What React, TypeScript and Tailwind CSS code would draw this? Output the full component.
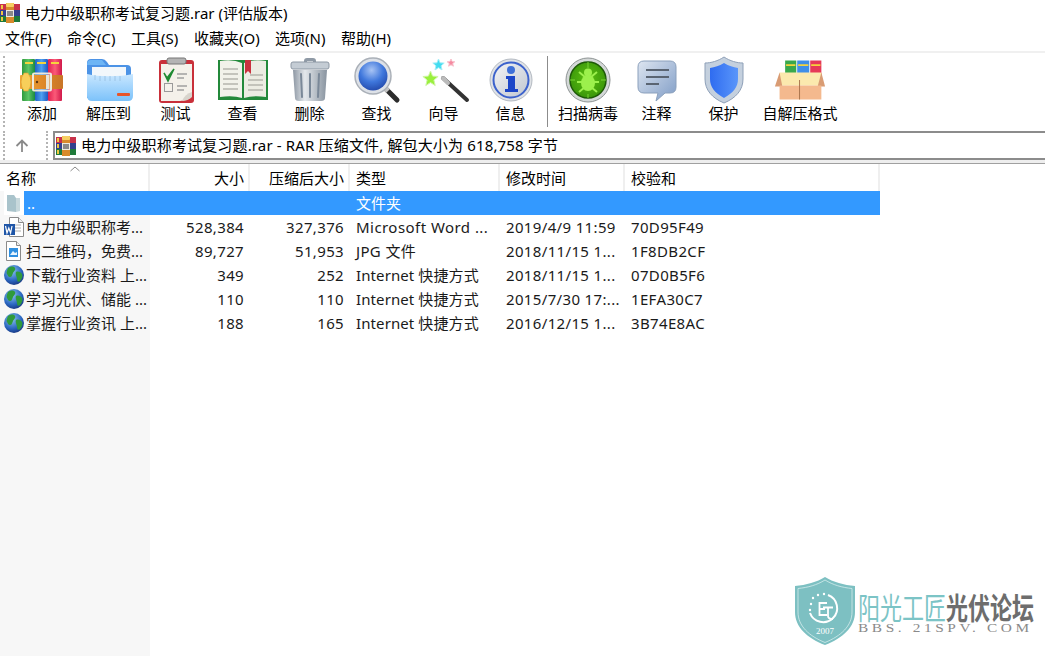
import { ReactNode } from 'react';

const font = { fontFamily: '"Noto Sans", "Noto Sans CJK SC", sans-serif' };

function starPoints(cx: number, cy: number, r: number) {
  const pts: string[] = [];
  for (let i = 0; i < 10; i++) {
    const rad = i % 2 === 0 ? r : r * 0.45;
    const a = -Math.PI / 2 + (i * Math.PI) / 5;
    pts.push(`${(cx + rad * Math.cos(a)).toFixed(1)},${(cy + rad * Math.sin(a)).toFixed(1)}`);
  }
  return pts.join(' ');
}

function RarIcon() {
  return (
    <svg width="44" height="44" viewBox="0 0 44 44">
      <defs>
        <linearGradient id="mg" x1="0" x2="1" y1="0" y2="0">
          <stop offset="0" stopColor="#2f9a3d" />
          <stop offset="0.5" stopColor="#5cc465" />
          <stop offset="1" stopColor="#1c8a40" />
        </linearGradient>
        <linearGradient id="mb" x1="0" x2="1" y1="0" y2="0">
          <stop offset="0" stopColor="#1f62c4" />
          <stop offset="0.5" stopColor="#4da0f0" />
          <stop offset="1" stopColor="#1f58c0" />
        </linearGradient>
        <linearGradient id="mr" x1="0" x2="1" y1="0" y2="0">
          <stop offset="0" stopColor="#e02050" />
          <stop offset="0.5" stopColor="#fb5a78" />
          <stop offset="1" stopColor="#d0184a" />
        </linearGradient>
        <linearGradient id="mo" x1="0" x2="1" y1="0" y2="0">
          <stop offset="0" stopColor="#f0a838" />
          <stop offset="0.5" stopColor="#e08a2a" />
          <stop offset="1" stopColor="#c87528" />
        </linearGradient>
      </defs>
      <rect x="2" y="1" width="13" height="42" rx="1" fill="url(#mg)" />
      <rect x="15" y="1" width="13" height="42" rx="1" fill="url(#mb)" />
      <rect x="28" y="1" width="14" height="42" rx="1" fill="url(#mr)" />
      <rect x="5" y="4" width="8" height="2" fill="#f5d33c" />
      <rect x="17" y="4" width="9" height="2" fill="#f5d33c" />
      <rect x="31" y="4" width="8" height="2" fill="#f5d33c" />
      <rect x="0" y="17" width="43" height="14" rx="1" fill="url(#mo)" />
      <path d="M4 15h4q3 4 3 9t-3 9H4q-3-4-3-9t3-9z" fill="#f7cf5a" stroke="#d89a30" strokeWidth="0.600" />
      <rect x="13" y="15.500" width="18" height="17" rx="1" fill="none" stroke="#ede8dc" strokeWidth="2" />
      <circle cx="17" cy="24" r="1.200" fill="#5a3410" />
      <rect x="26" y="17" width="3.500" height="14" fill="#e9e4d8" />
    </svg>
  );
}

function SmallRar({ size }: { size: number }) {
  return (
    <svg width={size} height={size} viewBox="0 0 20 20" className="shrink-0">
      <rect x="0" y="1" width="20" height="6" fill="#c8324a" />
      <rect x="0" y="7" width="20" height="6" fill="#34408e" />
      <rect x="0" y="13" width="20" height="6" fill="#1f7a3a" />
      <rect x="1" y="2" width="2" height="4" fill="#f0c840" />
      <rect x="1" y="8" width="2" height="4" fill="#f0c840" />
      <rect x="1" y="14" width="2" height="4" fill="#f0c840" />
      <rect x="6" y="0" width="8" height="20" fill="#d88a2c" />
      <rect x="6" y="0" width="8" height="4" rx="1" fill="#f6cf62" />
      <rect x="6.500" y="7.500" width="7" height="6" fill="#8a8a8a" stroke="#efeadf" />
    </svg>
  );
}

function FolderIcon() {
  return (
    <svg width="52" height="48" viewBox="0 0 52 48">
      <defs>
        <linearGradient id="fb" x1="0" x2="0" y1="0" y2="1">
          <stop offset="0" stopColor="#c9e7ff" />
          <stop offset="1" stopColor="#7cc2fa" />
        </linearGradient>
      </defs>
      <path d="M4 7q0-4 4-4h11q3 0 5 3l2 3h18q4 0 4 4v29H4z" fill="#4c93e6" />
      <path d="M4 9q0-5 4-5h11l4 5z" fill="#6db5f5" />
      <rect x="9" y="11" width="34" height="14" fill="#f2f7fb" />
      <path d="M4 18c12 3 32 3 46 0v22q0 5-5 5H9q-5 0-5-5z" fill="url(#fb)" />
      <path d="M12 19v5M17 20v5M22 20v5M27 20v5M32 20v5M37 20v5" stroke="#9cc4e6" />
      <rect x="34" y="37" width="13" height="3" rx="1" fill="#e8552a" />
    </svg>
  );
}

function TestIcon() {
  return (
    <svg width="52" height="48" viewBox="0 0 52 48">
      <rect x="9" y="4" width="35" height="43" rx="3" fill="#c9303a" />
      <path d="M11 8h31v30q-6 7-12 7H11z" fill="#f4f1ea" />
      <path d="M42 36q-7 2-10 9 6 0 10-4z" fill="#d8d4cc" />
      <rect x="17" y="2" width="19" height="6" rx="2" fill="#b4b4b4" stroke="#777" />
      <path d="M14 17l3 5 7-9-6 12z" fill="#1f8a32" stroke="#1f8a32" strokeWidth="1.500" />
      <rect x="14.500" y="27.500" width="8" height="8" fill="none" stroke="#9a9a9a" />
      <path d="M27 18h10M27 22h7M27 30h10M27 34h7" stroke="#a0a0a0" strokeWidth="1.500" />
    </svg>
  );
}

function ViewIcon() {
  return (
    <svg width="52" height="48" viewBox="0 0 52 48">
      <path d="M1 4h50v40H1z" fill="#23893a" />
      <path d="M3 5q13-2 22 2v35q-9-3-22-1z" fill="#f2f2ea" />
      <path d="M49 5q-13-2-22 2v35q9-3 22-1z" fill="#ecece2" />
      <path d="M6 13h15M6 18h15M6 23h15M6 28h15M6 33h15M33 19h13M31 24h15M31 29h15M31 34h15" stroke="#b5b5ad" strokeWidth="1.500" />
      <path d="M28 4h6v14l-3-3-3 3z" fill="#c9323e" />
    </svg>
  );
}

function TrashIcon() {
  return (
    <svg width="52" height="48" viewBox="0 0 52 48">
      <defs>
        <linearGradient id="tb" x1="0" x2="1" y1="0" y2="0">
          <stop offset="0" stopColor="#8d97a3" />
          <stop offset="0.35" stopColor="#e4e8ec" />
          <stop offset="1" stopColor="#88939f" />
        </linearGradient>
      </defs>
      <path d="M20 5q0-3 3-3h6q3 0 3 3v2h-3V5h-6v2h-3z" fill="#8f9aa6" />
      <rect x="7" y="6" width="38" height="7" rx="2" fill="#c4ccd4" stroke="#8d98a4" />
      <path d="M9 14h34l-2 28q0 3-4 3H15q-4 0-4-3z" fill="url(#tb)" />
      <path d="M17 18l1 23M26 18v23M35 18l-1 23" stroke="#7a8898" strokeWidth="2" strokeLinecap="round" />
    </svg>
  );
}

function FindIcon() {
  return (
    <svg width="52" height="48" viewBox="0 0 52 48">
      <defs>
        <radialGradient id="lens" cx="0.45" cy="0.3" r="0.8">
          <stop offset="0" stopColor="#a8c4f4" />
          <stop offset="0.5" stopColor="#3f77dc" />
          <stop offset="1" stopColor="#1d3fa0" />
        </radialGradient>
      </defs>
      <path d="M35 33l11 11" stroke="#2c2c2c" strokeWidth="5" strokeLinecap="round" />
      <path d="M31 29l6 6" stroke="#c4c4c4" strokeWidth="5" />
      <circle cx="22" cy="20" r="18" fill="#dde1e7" stroke="#aab0b8" strokeWidth="1.500" />
      <circle cx="22" cy="20" r="14.500" fill="url(#lens)" />
    </svg>
  );
}

function WizardIcon() {
  return (
    <svg width="52" height="48" viewBox="0 0 52 48">
      <path d="M25 22l24 22" stroke="#333" strokeWidth="4" strokeLinecap="round" />
      <path d="M25 22l5 5" stroke="#bbb" strokeWidth="4" strokeLinecap="round" />
      <polygon points={starPoints(12.5, 23, 8)} fill="#9af03c" stroke="#d0f5a6" />
      <polygon points={starPoints(20.5, 9, 6)} fill="#42dcf0" stroke="#a6eef8" />
      <polygon points={starPoints(33, 7, 4)} fill="#f58aa0" stroke="#f9c0cc" />
    </svg>
  );
}

function InfoIcon() {
  return (
    <svg width="52" height="48" viewBox="0 0 52 48">
      <defs>
        <linearGradient id="ib" x1="0" x2="1" y1="0" y2="1">
          <stop offset="0" stopColor="#f4f4f6" />
          <stop offset="1" stopColor="#bfc6d0" />
        </linearGradient>
      </defs>
      <circle cx="26" cy="24" r="21" fill="#dfe2e6" stroke="#b4bac2" />
      <circle cx="26" cy="24" r="17.500" fill="url(#ib)" stroke="#3c62cc" strokeWidth="2" />
      <circle cx="26" cy="14" r="4" fill="#3f70d8" />
      <path d="M21 20h9v13h3v3H20v-3h3v-10h-2z" fill="#1c46c8" />
    </svg>
  );
}

function BugIcon() {
  return (
    <svg width="52" height="48" viewBox="0 0 52 48">
      <defs>
        <radialGradient id="bg" cx="0.5" cy="0.45" r="0.55">
          <stop offset="0" stopColor="#5cc010" />
          <stop offset="1" stopColor="#3a960a" />
        </radialGradient>
      </defs>
      <circle cx="26" cy="24" r="22" fill="#d4d8d8" stroke="#8e9494" />
      <circle cx="26" cy="24" r="18" fill="url(#bg)" stroke="#1e5a08" strokeWidth="1.500" />
      <path d="M26 6v6M8 24h5M44 24h-5M26 42v-4" stroke="#7ad436" />
      <ellipse cx="26" cy="27" rx="7" ry="8" fill="#9cf04c" />
      <circle cx="26" cy="16.500" r="4" fill="#9cf04c" />
      <path d="M17 16l6 5M35 16l-6 5M15 26h7M37 26h-7M17 36l6-5M35 36l-6-5" stroke="#9cf04c" strokeWidth="2" />
    </svg>
  );
}

function CommentIcon() {
  return (
    <svg width="52" height="48" viewBox="0 0 52 48">
      <defs>
        <linearGradient id="cb" x1="0" x2="1" y1="0" y2="1">
          <stop offset="0" stopColor="#dde5f0" />
          <stop offset="1" stopColor="#7f9cc6" />
        </linearGradient>
      </defs>
      <path d="M13 5h26q6 0 6 6v20q0 6-6 6h-5l-9 8 2-8H13q-6 0-6-6V11q0-6 6-6z" fill="url(#cb)" stroke="#8ba0bc" />
      <path d="M15 14h23M15 21h23M15 28h13" stroke="#5a6472" strokeWidth="2" />
    </svg>
  );
}

function ShieldIcon() {
  return (
    <svg width="52" height="48" viewBox="0 0 52 48">
      <defs>
        <linearGradient id="sb" x1="0" x2="1" y1="0" y2="0">
          <stop offset="0" stopColor="#2f6cf0" />
          <stop offset="1" stopColor="#5a96fa" />
        </linearGradient>
      </defs>
      <path d="M26 1c6 4 13 6 19 6v16c0 11-7 19-19 24C14 42 7 34 7 23V7c6 0 13-2 19-6z" fill="#c4d0de" stroke="#8ea0b8" />
      <path d="M26 7c5 3 9 4 14 5v11c0 8-5 14-14 19-9-5-14-11-14-19V12c5-1 9-2 14-5z" fill="url(#sb)" />
    </svg>
  );
}

function BoxIcon() {
  return (
    <svg width="52" height="48" viewBox="0 0 56 48">
      <rect x="12" y="3" width="12" height="16" fill="#39a84c" />
      <rect x="25" y="3" width="13" height="16" fill="#3f8fe8" />
      <rect x="39" y="3" width="12" height="16" fill="#e63a58" />
      <path d="M13 8h10M26 8h11M40 8h10" stroke="#f5d33c" strokeWidth="2" />
      <path d="M6 16h45l2 14H4z" fill="#fbe9ae" />
      <path d="M6 16L1 31h8zM51 16l4 15h-8z" fill="#d99c74" />
      <path d="M6 30h45v15H6z" fill="#f4b98e" />
      <path d="M27.500 24v21" stroke="#a5704a" />
    </svg>
  );
}

function WordIcon() {
  return (
    <svg width="22" height="22" viewBox="0 0 22 22">
      <path d="M6.500 1.500h9l5 5v14h-14z" fill="#fff" stroke="#8a8a8a" />
      <path d="M15.500 1.500v5h5" fill="#eee" stroke="#8a8a8a" />
      <path d="M10 9h8M12 12h6M12 15h6" stroke="#b0b0b0" />
      <rect x="1" y="8" width="11" height="11" fill="#1f56a8" />
      <path d="M2.500 10l1.500 7 1.800-5 1.800 5 1.400-7" fill="none" stroke="#fff" strokeWidth="1.200" />
    </svg>
  );
}

function ImageIcon() {
  return (
    <svg width="22" height="22" viewBox="0 0 22 22">
      <path d="M3.500 1.500h10l4 4v15h-14z" fill="#fff" stroke="#8a8a8a" />
      <path d="M13.500 1.500v4h4" fill="#eee" stroke="#8a8a8a" />
      <rect x="6" y="8" width="9" height="9" fill="#2f8fe0" />
      <path d="M7 15l3-4 2 2 2-1v3z" fill="#e8f4fd" />
    </svg>
  );
}

function GlobeIcon({ id }: { id: string }) {
  return (
    <svg width="22" height="22" viewBox="0 0 22 22">
      <defs>
        <radialGradient id={id} cx="0.4" cy="0.3" r="0.8">
          <stop offset="0" stopColor="#8cc4f0" />
          <stop offset="0.6" stopColor="#2a66c0" />
          <stop offset="1" stopColor="#142a70" />
        </radialGradient>
      </defs>
      <circle cx="11" cy="11" r="10" fill={`url(#${id})`} />
      <path d="M5 4c3-2 6-2 7 0s-1 3-2 5-1 4-3 4-2-2-3-3 0-4 1-6zM13 8c2-1 5 0 6 2s0 5-2 7-3 0-3-2-2-5-1-7z" fill="#2f9a3c" />
    </svg>
  );
}

function UpFolderIcon() {
  return (
    <svg width="20" height="24" viewBox="0 0 20 24">
      <rect width="20" height="24" fill="#ffffff" />
      <path d="M3 4l7 0 2 3v14l-9-1z" fill="#a9c3cb" />
      <path d="M12 7l4 0v13l-4 1z" fill="#c7d8dc" />
    </svg>
  );
}

function ToolButton({ icon, label, width = 'w-[67px]' }: { icon: ReactNode; label: string; width?: string }) {
  return (
    <div className={`flex flex-col items-center shrink-0 ${width}`}>
      <div className="h-[48px] flex items-center justify-center">{icon}</div>
      <span className="mt-[-1px] text-[15px] leading-[20px] text-black whitespace-nowrap">{label}</span>
    </div>
  );
}

function Gripper() {
  return <div className="w-[2px] border-l-2 border-dotted border-[#b4b4b4]" />;
}

const rows = [
  { name: '电力中级职称考...', icon: <WordIcon />, size: '528,384', packed: '327,376', type: 'Microsoft Word ...', typeCls: 'tracking-[0.450px]', time: '2019/4/9 11:59', crc: '70D95F49' },
  { name: '扫二维码，免费...', icon: <ImageIcon />, size: '89,727', packed: '51,953', type: 'JPG 文件', typeCls: 'tracking-[0.350px]', time: '2018/11/15 1...', crc: '1F8DB2CF' },
  { name: '下载行业资料 上...', icon: <GlobeIcon id="g1" />, size: '349', packed: '252', type: 'Internet 快捷方式', typeCls: 'tracking-[0.100px]', time: '2018/11/15 1...', crc: '07D0B5F6' },
  { name: '学习光伏、储能 ...', icon: <GlobeIcon id="g2" />, size: '110', packed: '110', type: 'Internet 快捷方式', typeCls: 'tracking-[0.100px]', time: '2015/7/30 17:...', crc: '1EFA30C7' },
  { name: '掌握行业资讯 上...', icon: <GlobeIcon id="g3" />, size: '188', packed: '165', type: 'Internet 快捷方式', typeCls: 'tracking-[0.100px]', time: '2016/12/15 1...', crc: '3B74E8AC' },
];

const menus = [
  { label: '文件(F)', cls: 'w-[62px]' },
  { label: '命令(C)', cls: 'w-[64px]' },
  { label: '工具(S)', cls: 'w-[63px]' },
  { label: '收藏夹(O)', cls: 'w-[81px]' },
  { label: '选项(N)', cls: 'w-[66px]' },
  { label: '帮助(H)', cls: 'w-[60px]' },
];

function HeaderCell({ label, width, right }: { label: string; width: string; right?: boolean }) {
  return (
    <div className={`${width} h-full shrink-0 border-r-2 border-[#efefef] pl-[6px] pr-[4px] pt-[1px] flex items-center ${right ? 'justify-end' : ''}`}>
      {label}
    </div>
  );
}

function Watermark() {
  return (
    <div className="absolute left-[795px] top-[577px] flex items-start gap-[3px]">
      <svg width="60" height="68" viewBox="0 0 60 68">
        <path d="M30 0c8 5 19 8 30 9v26c0 15-12 26-30 33C12 61 0 50 0 35V9c11-1 22-4 30-9z" fill="#7dc0c2" />
        <path d="M30 3c8 5 17 7.500 27 8.500v23.500c0 14-11 24-27 30.500C14 59 3 49 3 35V11.500c10-1 19-3.500 27-8.500z" fill="none" stroke="#d4ecec" strokeWidth="0.800" />
        <path d="M33 18a14 14 0 1 1-18 18" fill="none" stroke="#fff" strokeWidth="2" />
        <path d="M32 26H24.500v12H32M28 30.500h10M33 30.500V39q0 3 5 3M25 32h5" fill="none" stroke="#fff" strokeWidth="1.800" />
        <circle cx="15" cy="33" r="1.200" fill="#fff" />
        <circle cx="16" cy="27" r="1.200" fill="#fff" />
        <circle cx="18" cy="21" r="1.200" fill="#fff" />
        <circle cx="23" cy="18" r="1.200" fill="#fff" />
        <circle cx="29" cy="17" r="1.200" fill="#fff" />
        <text x="30" y="57" textAnchor="middle" fontSize="9" fill="#fff" fontFamily='"Liberation Serif", serif'>2007</text>
      </svg>
      <div className="flex flex-col pt-[17px]">
        <div className="flex text-[22px] leading-[22px] font-['Noto_Sans_CJK_SC',sans-serif] whitespace-nowrap scale-y-[1.35]">
          <span className="text-[#7cc4c6]">阳光工匠</span>
          <span className="text-[#6d6d6d] font-bold">光伏论坛</span>
        </div>
        <div className="mt-[5px] text-[#8a8a8a] text-[12px] leading-[14px] tracking-[2.800px] font-['Liberation_Serif',serif] whitespace-nowrap origin-left scale-x-[1.28]">
          BBS. 21SPV. COM
        </div>
      </div>
    </div>
  );
}

export default function App() {
  return (
    <div className="relative w-[1045px] h-[656px] overflow-hidden bg-white flex flex-col text-[15px] text-[#1a1a1a]" style={font}>
      <div className="h-[26px] flex items-center gap-[5px] shrink-0 text-black">
        <SmallRar size={20} />
        <span>电力中级职称考试复习题.rar (评估版本)</span>
      </div>

      <div className="h-[25px] flex items-center shrink-0 text-black pl-[5px]">
        {menus.map(m => (
          <span key={m.label} className={`${m.cls} whitespace-nowrap`}>{m.label}</span>
        ))}
      </div>

      <div className="h-[80px] shrink-0 border-t-2 border-[#f0f0f0] flex pt-[3px] pb-[4px]">
        <div className="w-[9px] shrink-0 pl-[3px] flex">
          <Gripper />
        </div>
        <ToolButton icon={<RarIcon />} label="添加" width="w-[66px]" />
        <ToolButton icon={<FolderIcon />} label="解压到" />
        <ToolButton icon={<TestIcon />} label="测试" />
        <ToolButton icon={<ViewIcon />} label="查看" />
        <ToolButton icon={<TrashIcon />} label="删除" />
        <ToolButton icon={<FindIcon />} label="查找" />
        <ToolButton icon={<WizardIcon />} label="向导" />
        <ToolButton icon={<InfoIcon />} label="信息" />
        <div className="w-[9px] shrink-0 flex justify-start pl-[3px]">
          <div className="w-px bg-[#8c8c8c] h-full" />
        </div>
        <ToolButton icon={<BugIcon />} label="扫描病毒" width="w-[70px]" />
        <ToolButton icon={<CommentIcon />} label="注释" />
        <ToolButton icon={<ShieldIcon />} label="保护" />
        <ToolButton icon={<BoxIcon />} label="自解压格式" width="w-[86px]" />
      </div>

      <div className="h-[29px] shrink-0 flex items-stretch">
        <div className="w-[3px] shrink-0" />
        <Gripper />
        <div className="w-[41px] shrink-0 flex items-center justify-center pr-[7px]">
          <svg width="16" height="16" viewBox="0 0 16 16">
            <path d="M8 14V2.500M2.500 8L8 2.500 13.500 8" fill="none" stroke="#8a8a8a" strokeWidth="1.800" />
          </svg>
        </div>
        <Gripper />
        <div className="w-[5px] shrink-0" />
        <div className="flex-1 border-2 border-[#8c8c8c] border-r-0 flex items-center gap-[5px] pl-[1px] text-black tracking-[0.150px]">
          <SmallRar size={20} />
          <span>电力中级职称考试复习题.rar - RAR 压缩文件, 解包大小为 618,758 字节</span>
        </div>
      </div>

      <div className="h-[4px] shrink-0 bg-[#eeeeee] border-b border-b-[#a0a0a0]" />

      <div className="relative h-[27px] shrink-0 flex items-center text-black">
        <HeaderCell label="名称" width="w-[150px]" />
        <HeaderCell label="大小" width="w-[100px]" right />
        <HeaderCell label="压缩后大小" width="w-[100px]" right />
        <HeaderCell label="类型" width="w-[150px]" />
        <HeaderCell label="修改时间" width="w-[125px]" />
        <HeaderCell label="校验和" width="w-[255px]" />
        <svg className="absolute left-[70px] top-[2px]" width="10" height="6" viewBox="0 0 10 6">
          <path d="M.5 5L5 1l4.500 4" fill="none" stroke="#8a8a8a" />
        </svg>
      </div>

      <div className="flex-1 flex min-h-0">
        <div className="w-[150px] shrink-0 bg-[#f7f7f7] flex flex-col">
          <div className="h-[24px] flex items-center pl-[4px]">
            <UpFolderIcon />
            <span className="flex-1 h-full bg-[#3399ff] text-white pl-[3px] leading-[24px]">..</span>
          </div>
          {rows.map(r => (
            <div key={r.crc} className="h-[24px] flex items-center pl-[3px] whitespace-nowrap">
              <span className="w-[23px] shrink-0">{r.icon}</span>
              <span>{r.name}</span>
            </div>
          ))}
        </div>
        <div className="w-[730px] shrink-0 flex flex-col tracking-[0.350px]">
          <div className="h-[24px] bg-[#3399ff] text-white flex items-center pl-[206px] tracking-normal">文件夹</div>
          {rows.map(r => (
            <div key={r.crc} className="h-[24px] flex items-center whitespace-nowrap">
              <span className="w-[94px] text-right shrink-0">{r.size}</span>
              <span className="w-[100px] text-right shrink-0">{r.packed}</span>
              <span className={`w-[150px] pl-[12px] shrink-0 ${r.typeCls}`}>{r.type}</span>
              <span className="w-[125px] pl-[12px] shrink-0">{r.time}</span>
              <span className="pl-[12px]">{r.crc}</span>
            </div>
          ))}
        </div>
      </div>

      <Watermark />
    </div>
  );
}
